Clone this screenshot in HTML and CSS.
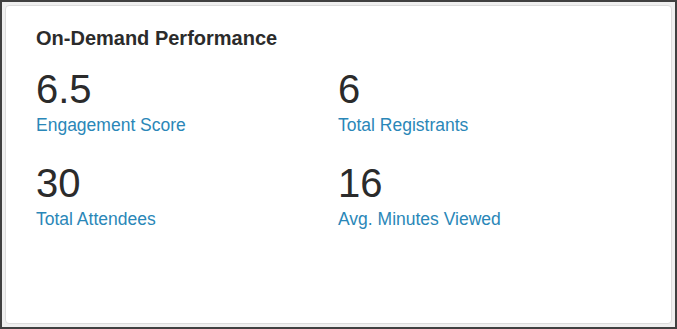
FILE: index.html
```html
<!DOCTYPE html>
<html lang="en">
<head>
<meta charset="utf-8">
<title>On-Demand Performance</title>
<link rel="stylesheet" href="styles.css">
</head>
<body>
<div class="frame">
  <section class="card">
    <h2 class="card-title">On-Demand Performance</h2>
    <div class="stats">
      <div class="stat">
        <div class="stat-value">6.5</div>
        <div class="stat-label">Engagement Score</div>
      </div>
      <div class="stat">
        <div class="stat-value">6</div>
        <div class="stat-label">Total Registrants</div>
      </div>
      <div class="stat">
        <div class="stat-value">30</div>
        <div class="stat-label">Total Attendees</div>
      </div>
      <div class="stat">
        <div class="stat-value">16</div>
        <div class="stat-label">Avg. Minutes Viewed</div>
      </div>
    </div>
  </section>
</div>
</body>
</html>
```
FILE: styles.css
```css
html, body {
  margin: 0;
  padding: 0;
  height: 100%;
}

body {
  font-family: "Liberation Sans", Arial, sans-serif;
  background: #404040;
}

.frame {
  box-sizing: border-box;
  height: 100%;
  border: 2px solid #404040;
  background: #efefef;
  padding: 3px;
}

.card {
  box-sizing: border-box;
  height: 100%;
  background: #ffffff;
  border: 1px solid #dcdcdc;
  border-radius: 4px;
  padding: 21px 31px 0 30px;
}

.card-title {
  margin: 0;
  font-size: 20px;
  line-height: 22px;
  font-weight: bold;
  color: #2b2b2b;
}

.stats {
  margin-top: 18px;
  display: grid;
  grid-template-columns: 1fr 1fr;
  row-gap: 26px;
}

.stat-value {
  font-size: 40px;
  line-height: 44px;
  color: #2b2b2b;
}

.stat-label {
  margin-top: 4px;
  font-size: 17.5px;
  line-height: 20px;
  color: #2a87b8;
}
```
